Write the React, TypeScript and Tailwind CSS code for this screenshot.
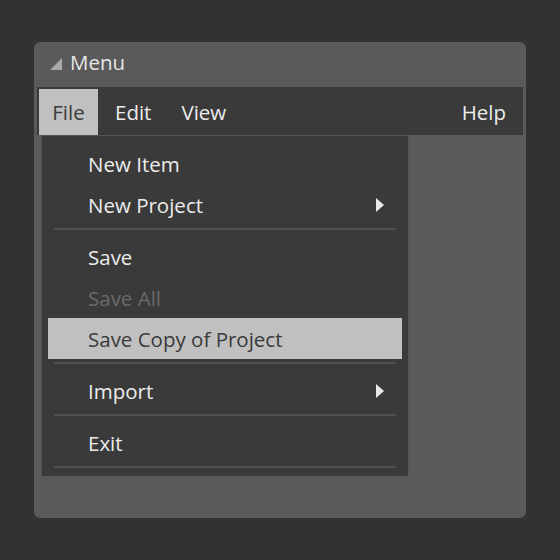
import { useState } from "react";

type Entry =
  | { kind: "item"; label: string; sub?: boolean; disabled?: boolean; active?: boolean }
  | { kind: "sep" };

const fileMenu: Entry[] = [
  { kind: "item", label: "New Item" },
  { kind: "item", label: "New Project", sub: true },
  { kind: "sep" },
  { kind: "item", label: "Save" },
  { kind: "item", label: "Save All", disabled: true },
  { kind: "item", label: "Save Copy of Project", active: true },
  { kind: "sep" },
  { kind: "item", label: "Import", sub: true },
  { kind: "sep" },
  { kind: "item", label: "Exit" },
  { kind: "sep" },
];

function SubArrow() {
  return (
    <svg width="8" height="14" viewBox="0 0 8 14" className="mr-[18px]">
      <path d="M0 0 L8 7 L0 14 Z" fill="#e8e8e8" />
    </svg>
  );
}

function MenuRow({ entry }: { entry: Entry }) {
  if (entry.kind === "sep") {
    return <div className="mx-[12px] mt-[3px] mb-[6px] h-[2px] bg-[#505050]" />;
  }
  const color = entry.active
    ? "bg-[#c0c0c0] text-[#3a3a3a]"
    : entry.disabled
      ? "text-[#6a6a6a]"
      : "text-[#ececec]";
  return (
    <div className={`mx-[6px] flex h-[41px] items-center justify-between pl-[40px] ${color}`}>
      <span className="pt-[1px]">{entry.label}</span>
      {entry.sub && <SubArrow />}
    </div>
  );
}

export default function App() {
  const [open] = useState(true);

  return (
    <div
      className="flex h-[560px] w-[560px] items-start justify-center bg-[#323232] pt-[42px] text-[20.5px]"
      style={{ fontFamily: '"Open Sans", "Noto Sans", sans-serif' }}
    >
      <div className="relative flex h-[476px] w-[492px] flex-col rounded-[6px] bg-[#5a5a5a] px-[3px]">
        <div className="flex h-[45px] items-center gap-[8px] pb-[4px] pl-[13px] text-[#e6e6e6]">
          <svg width="12" height="12" viewBox="0 0 12 12" className="mt-[2px]">
            <path d="M12 0 L12 12 L0 12 Z" fill="#a8a8a8" />
          </svg>
          <span>Menu</span>
        </div>
        <div className="flex h-[48px] items-stretch bg-[#3a3a3a] p-[2px] pb-0 text-[#ececec]">
          <div className="flex w-[59px] items-center justify-center bg-[#c0c0c0] text-[#3c3c3c]">File</div>
          <div className="flex items-center pl-[17px] pr-[15px]">Edit</div>
          <div className="flex items-center pl-[15px]">View</div>
          <div className="ml-auto flex items-center pr-[15px]">Help</div>
        </div>
        {open && (
          <div className="absolute left-[7px] top-[93px] w-[368px] border border-[#555555] bg-[#3a3a3a] pt-[7px] pb-[2px]">
            {fileMenu.map((e, i) => (
              <MenuRow key={i} entry={e} />
            ))}
          </div>
        )}
      </div>
    </div>
  );
}
